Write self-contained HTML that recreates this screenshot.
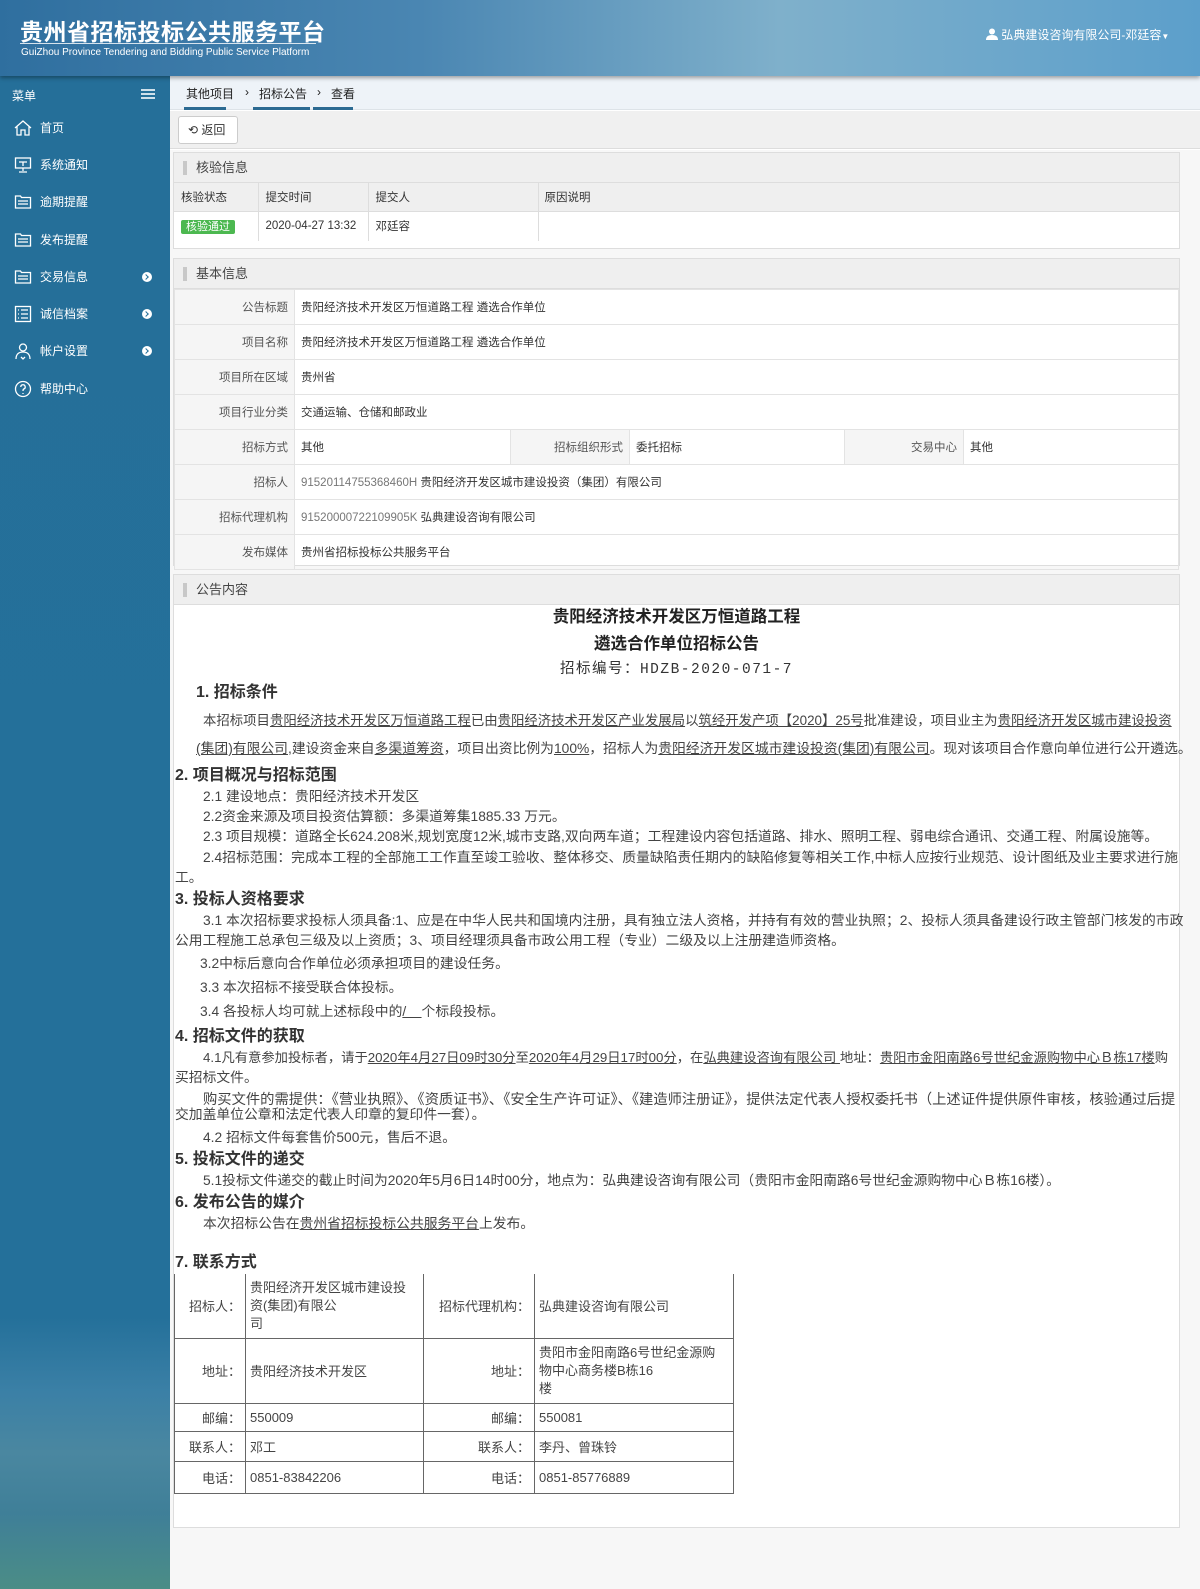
<!DOCTYPE html>
<html><head><meta charset="utf-8">
<style>
*{margin:0;padding:0;box-sizing:border-box}
body{width:1200px;height:1589px;position:relative;overflow:hidden;background:#fff;font-family:"Liberation Sans","Noto Sans CJK SC",sans-serif;font-size:12px;color:#333}
.a{position:absolute}
#hdr{left:0;top:0;width:1200px;height:76px;background:linear-gradient(90deg,#2f6f9f 0%,#4a86b2 35%,#7fb0cb 65%,#5c9fcb 100%);box-shadow:0 2px 4px rgba(0,0,0,.35);z-index:3}
#side{left:0;top:76px;width:170px;height:1513px;background:linear-gradient(180deg,#256f99 0%,#24709a 82%,#3b80a6 87%,#4a87a0 91%,#3f7f98 95%,#4b8d86 100%)}
.mi{position:absolute;left:14px;color:#fff;font-size:12px;height:20px;line-height:20px;width:138px}
.mi svg{position:absolute;left:0;top:1px}
.mi span{position:absolute;left:26px}
.mi i{position:absolute;right:0;top:5px;width:10px;height:10px;border-radius:50%;background:#fff}
.mi i:after{content:"";position:absolute;left:2px;top:3px;width:3px;height:3px;border-right:1.5px solid #24709a;border-bottom:1.5px solid #24709a;transform:rotate(-45deg)}
.panel{position:absolute;left:173px;width:1007px;border:1px solid #ddd;background:#fff}
.ph{height:30px;background:#efefef;border-bottom:1px solid #ddd;line-height:29px;padding-left:22px;font-size:13px;color:#444;position:relative}
.ph:before{content:"";position:absolute;left:9px;top:8px;width:4px;height:14px;background:#c8c8c8}
table{border-collapse:collapse}
.bt td{border:1px solid #e3e3e3;height:35px;font-size:11.5px;padding:0 6px}
.bt td.k{background:#f5f5f5;text-align:right;color:#555}
.l{position:absolute;white-space:nowrap;font-size:13.8px;line-height:18px;color:#444}
.h{position:absolute;white-space:nowrap;font-size:16px;font-weight:bold;color:#333;line-height:20px}
u{text-decoration:underline}
.ct td{border:1px solid #666;font-size:13px;color:#444;padding:0 4px}
</style></head><body>
<div id="hdr" class="a">
 <div class="a" style="left:20px;top:13px;font-size:23px;font-weight:bold;color:#fff;letter-spacing:0.5px;font-family:'Noto Sans CJK SC',sans-serif">贵州省招标投标公共服务平台</div>
 <div class="a" style="left:20px;top:43px;width:296px;border-top:1px solid rgba(255,255,255,.8)"></div>
 <div class="a" style="left:21px;top:47px;font-size:10px;color:#fff">GuiZhou Province Tendering and Bidding Public Service Platform</div>
 <div class="a" style="left:986px;top:26px;font-size:12px;color:#fff;white-space:nowrap"><svg width="12" height="12" viewBox="0 0 12 12" style="vertical-align:-1px"><circle cx="6" cy="3.5" r="3" fill="#fff"/><path d="M0 12 Q0 7 6 7 Q12 7 12 12Z" fill="#fff"/></svg> 弘典建设咨询有限公司-邓廷容<span style="font-size:8px">▼</span></div>
</div>
<div id="side" class="a">
 <div class="a" style="left:12px;top:11px;color:#fff;font-size:12px">菜单</div>
 <div class="a" style="left:141px;top:13px;width:14px;height:2px;background:#cfe0ea;box-shadow:0 4px 0 #cfe0ea,0 8px 0 #cfe0ea"></div>
</div>
<div class="mi" style="top:118px"><svg width="18" height="18" viewBox="0 0 18 18" fill="none" stroke="#fff" stroke-width="1.3"><path d="M1 9L9 2l8 7M3 7.5V16h4v-5h4v5h4V7.5"/></svg><span>首页</span></div>
<div class="mi" style="top:155px"><svg width="18" height="18" viewBox="0 0 18 18" fill="none" stroke="#fff" stroke-width="1.3"><rect x="1.5" y="2" width="15" height="10"/><path d="M9 12v3M5 16h8M5 6h8M9 6v4"/></svg><span>系统通知</span></div>
<div class="mi" style="top:192px"><svg width="18" height="18" viewBox="0 0 18 18" fill="none" stroke="#fff" stroke-width="1.3"><path d="M1.5 3h5l1 1.5h9V15h-15z"/><path d="M4 8h10M4 11h10"/></svg><span>逾期提醒</span></div>
<div class="mi" style="top:230px"><svg width="18" height="18" viewBox="0 0 18 18" fill="none" stroke="#fff" stroke-width="1.3"><path d="M1.5 3h5l1 1.5h9V15h-15z"/><path d="M4 8h10M4 11h10"/></svg><span>发布提醒</span></div>
<div class="mi" style="top:267px"><svg width="18" height="18" viewBox="0 0 18 18" fill="none" stroke="#fff" stroke-width="1.3"><path d="M1.5 3h5l1 1.5h9V15h-15z"/><path d="M4 8h10M4 11h10"/></svg><span>交易信息</span><i></i></div>
<div class="mi" style="top:304px"><svg width="18" height="18" viewBox="0 0 18 18" fill="none" stroke="#fff" stroke-width="1.3"><rect x="1.5" y="1.5" width="15" height="15"/><path d="M4 5h1M7 5h7M4 9h1M7 9h7M4 13h1M7 13h7"/></svg><span>诚信档案</span><i></i></div>
<div class="mi" style="top:341px"><svg width="18" height="18" viewBox="0 0 18 18" fill="none" stroke="#fff" stroke-width="1.3"><circle cx="9" cy="5.5" r="3.5"/><path d="M2 17c0-5 3-7 7-7s7 2 7 7M7 15l2 2 2-2"/></svg><span>帐户设置</span><i></i></div>
<div class="mi" style="top:379px"><svg width="18" height="18" viewBox="0 0 18 18" fill="none" stroke="#fff" stroke-width="1.3"><circle cx="9" cy="9" r="7.5"/><path d="M6.8 7a2.2 2.2 0 1 1 3 2c-.8.4-.8 1-.8 2M9 13v1"/></svg><span>帮助中心</span></div>

<div class="a" style="left:170px;top:76px;width:1030px;height:34px;background:#eef3f8;border-bottom:1px solid #dde3e8"></div>
<div class="a" style="left:186px;top:85px;font-size:12px;color:#222;white-space:nowrap">其他项目</div>
<div class="a" style="left:245px;top:85px;font-size:12px;color:#222">›</div>
<div class="a" style="left:259px;top:85px;font-size:12px;color:#222;white-space:nowrap">招标公告</div>
<div class="a" style="left:317px;top:85px;font-size:12px;color:#222">›</div>
<div class="a" style="left:331px;top:85px;font-size:12px;color:#222">查看</div>
<div class="a" style="left:184px;top:107px;width:42px;height:3px;background:#2b6a92"></div>
<div class="a" style="left:253px;top:107px;width:57px;height:3px;background:#2b6a92"></div>
<div class="a" style="left:313px;top:107px;width:40px;height:3px;background:#2b6a92"></div>
<div class="a" style="left:170px;top:111px;width:1030px;height:38px;background:#f0f0f0;border-bottom:1px solid #ddd"></div>
<div class="a" style="left:178px;top:116px;width:60px;height:28px;background:#fff;border:1px solid #ccc;border-radius:3px;font-size:12px;line-height:26px;padding-left:9px">⟲ 返回</div>
<div class="a" style="left:170px;top:150px;width:1030px;height:1439px;background:#f7f7f7"></div>

<div class="panel" style="top:152px;height:97px">
 <div class="ph">核验信息</div>
 <table style="width:1005px;font-size:11.5px">
  <tr style="height:28px;background:#efefef"><td style="width:84px;padding-left:7px;border-right:1px solid #ddd">核验状态</td><td style="width:110px;padding-left:7px;border-right:1px solid #ddd">提交时间</td><td style="width:170px;padding-left:7px;border-right:1px solid #ddd">提交人</td><td style="padding-left:6px">原因说明</td></tr>
  <tr style="height:30px;border-top:1px solid #ddd"><td style="padding-left:7px;border-right:1px solid #ddd"><span style="background:#4cb850;color:#fff;padding:1px 5px;border-radius:2px;font-size:11px">核验通过</span></td><td style="padding-left:7px;border-right:1px solid #ddd">2020-04-27 13:32</td><td style="padding-left:7px;border-right:1px solid #ddd">邓廷容</td><td></td></tr>
 </table>
</div>

<div class="panel" style="top:258px;height:308px">
 <div class="ph">基本信息</div>
 <table class="bt" style="width:1005px">
  <tr><td class="k" style="width:120px">公告标题</td><td colspan="5">贵阳经济技术开发区万恒道路工程 遴选合作单位</td></tr>
  <tr><td class="k">项目名称</td><td colspan="5">贵阳经济技术开发区万恒道路工程 遴选合作单位</td></tr>
  <tr><td class="k">项目所在区域</td><td colspan="5">贵州省</td></tr>
  <tr><td class="k">项目行业分类</td><td colspan="5">交通运输、仓储和邮政业</td></tr>
  <tr><td class="k">招标方式</td><td style="width:216px">其他</td><td class="k" style="width:119px">招标组织形式</td><td style="width:215px">委托招标</td><td class="k" style="width:119px">交易中心</td><td>其他</td></tr>
  <tr><td class="k">招标人</td><td colspan="5"><span style="color:#777">91520114755368460H</span> 贵阳经济开发区城市建设投资（集团）有限公司</td></tr>
  <tr><td class="k">招标代理机构</td><td colspan="5"><span style="color:#777">91520000722109905K</span> 弘典建设咨询有限公司</td></tr>
  <tr><td class="k">发布媒体</td><td colspan="5">贵州省招标投标公共服务平台</td></tr>
 </table>
</div>

<div class="panel" style="top:574px;height:954px">
 <div class="ph">公告内容</div>
</div>
<div class="a" style="left:174px;top:604px;width:1005px;text-align:center;font-size:16.5px;font-weight:bold;line-height:27px;color:#222">贵阳经济技术开发区万恒道路工程<br>遴选合作单位招标公告</div>
<div class="a" style="left:174px;top:657px;width:1005px;text-align:center;font-size:14.5px;letter-spacing:1.5px;color:#333;font-family:'Liberation Mono','Noto Sans CJK SC',monospace">招标编号：HDZB-2020-071-7</div>

<div class="h" style="left:196px;top:683px">1. 招标条件</div>
<div class="l" style="left:203px;top:712px;font-size:13.4px">本招标项目<u>贵阳经济技术开发区万恒道路工程</u>已由<u>贵阳经济技术开发区产业发展局</u>以<u>筑经开发产项【2020】25号</u>批准建设，项目业主为<u>贵阳经济开发区城市建设投资</u></div>
<div class="l" style="left:196px;top:740px"><u>(集团)有限公司</u>,建设资金来自<u>多渠道筹资</u>，项目出资比例为<u>100%</u>，招标人为<u>贵阳经济开发区城市建设投资(集团)有限公司</u>。现对该项目合作意向单位进行公开遴选。</div>

<div class="h" style="left:175px;top:766px">2. 项目概况与招标范围</div>
<div class="l" style="left:203px;top:788px">2.1 建设地点：贵阳经济技术开发区</div>
<div class="l" style="left:203px;top:808px">2.2资金来源及项目投资估算额：多渠道筹集1885.33 万元。</div>
<div class="l" style="left:203px;top:828px">2.3 项目规模：道路全长624.208米,规划宽度12米,城市支路,双向两车道；工程建设内容包括道路、排水、照明工程、弱电综合通讯、交通工程、附属设施等。</div>
<div class="l" style="left:203px;top:849px">2.4招标范围：完成本工程的全部施工工作直至竣工验收、整体移交、质量缺陷责任期内的缺陷修复等相关工作,中标人应按行业规范、设计图纸及业主要求进行施</div>
<div class="l" style="left:175px;top:869px">工。</div>

<div class="h" style="left:175px;top:890px">3. 投标人资格要求</div>
<div class="l" style="left:203px;top:912px">3.1 本次招标要求投标人须具备:1、应是在中华人民共和国境内注册，具有独立法人资格，并持有有效的营业执照；2、投标人须具备建设行政主管部门核发的市政</div>
<div class="l" style="left:175px;top:932px">公用工程施工总承包三级及以上资质；3、项目经理须具备市政公用工程（专业）二级及以上注册建造师资格。</div>
<div class="l" style="left:200px;top:955px">3.2中标后意向合作单位必须承担项目的建设任务。</div>
<div class="l" style="left:200px;top:979px">3.3 本次招标不接受联合体投标。</div>
<div class="l" style="left:200px;top:1003px">3.4 各投标人均可就上述标段中的<u>/&nbsp;&nbsp;&nbsp;&nbsp;</u>个标段投标。</div>

<div class="h" style="left:175px;top:1027px">4. 招标文件的获取</div>
<div class="l" style="left:203px;top:1049px;font-size:13.3px">4.1凡有意参加投标者，请于<u>2020年4月27日09时30分</u>至<u>2020年4月29日17时00分</u>，在<u>弘典建设咨询有限公司 </u>地址：<u>贵阳市金阳南路6号世纪金源购物中心Ｂ栋17楼</u>购</div>
<div class="l" style="left:175px;top:1069px">买招标文件。</div>
<div class="l" style="left:203px;top:1091px;font-size:14.3px">购买文件的需提供：《营业执照》、《资质证书》、《安全生产许可证》、《建造师注册证》，提供法定代表人授权委托书（上述证件提供原件审核，核验通过后提</div>
<div class="l" style="left:175px;top:1106px">交加盖单位公章和法定代表人印章的复印件一套）。</div>
<div class="l" style="left:203px;top:1129px">4.2 招标文件每套售价500元，售后不退。</div>

<div class="h" style="left:175px;top:1150px">5. 投标文件的递交</div>
<div class="l" style="left:203px;top:1172px">5.1投标文件递交的截止时间为2020年5月6日14时00分，地点为：弘典建设咨询有限公司（贵阳市金阳南路6号世纪金源购物中心Ｂ栋16楼）。</div>

<div class="h" style="left:175px;top:1193px">6. 发布公告的媒介</div>
<div class="l" style="left:203px;top:1215px">本次招标公告在<u>贵州省招标投标公共服务平台</u>上发布。</div>

<div class="h" style="left:175px;top:1253px">7. 联系方式</div>
<table class="ct a" style="left:174px;top:1274px;width:560px;border-top:none">
 <tr style="height:64px"><td style="width:71px;text-align:right;border-top:none">招标人：</td><td style="width:178px;border-top:none;line-height:18px">贵阳经济开发区城市建设投<br>资(集团)有限公<br>司</td><td style="width:111px;text-align:right;border-top:none">招标代理机构：</td><td style="border-top:none">弘典建设咨询有限公司</td></tr>
 <tr style="height:65px"><td style="text-align:right">地址：</td><td>贵阳经济技术开发区</td><td style="text-align:right">地址：</td><td style="line-height:18px">贵阳市金阳南路6号世纪金源购<br>物中心商务楼B栋16<br>楼</td></tr>
 <tr style="height:28px"><td style="text-align:right">邮编：</td><td>550009</td><td style="text-align:right">邮编：</td><td>550081</td></tr>
 <tr style="height:30px"><td style="text-align:right">联系人：</td><td>邓工</td><td style="text-align:right">联系人：</td><td>李丹、曾珠铃</td></tr>
 <tr style="height:32px"><td style="text-align:right">电话：</td><td>0851-83842206</td><td style="text-align:right">电话：</td><td>0851-85776889</td></tr>
</table>
</body></html>
